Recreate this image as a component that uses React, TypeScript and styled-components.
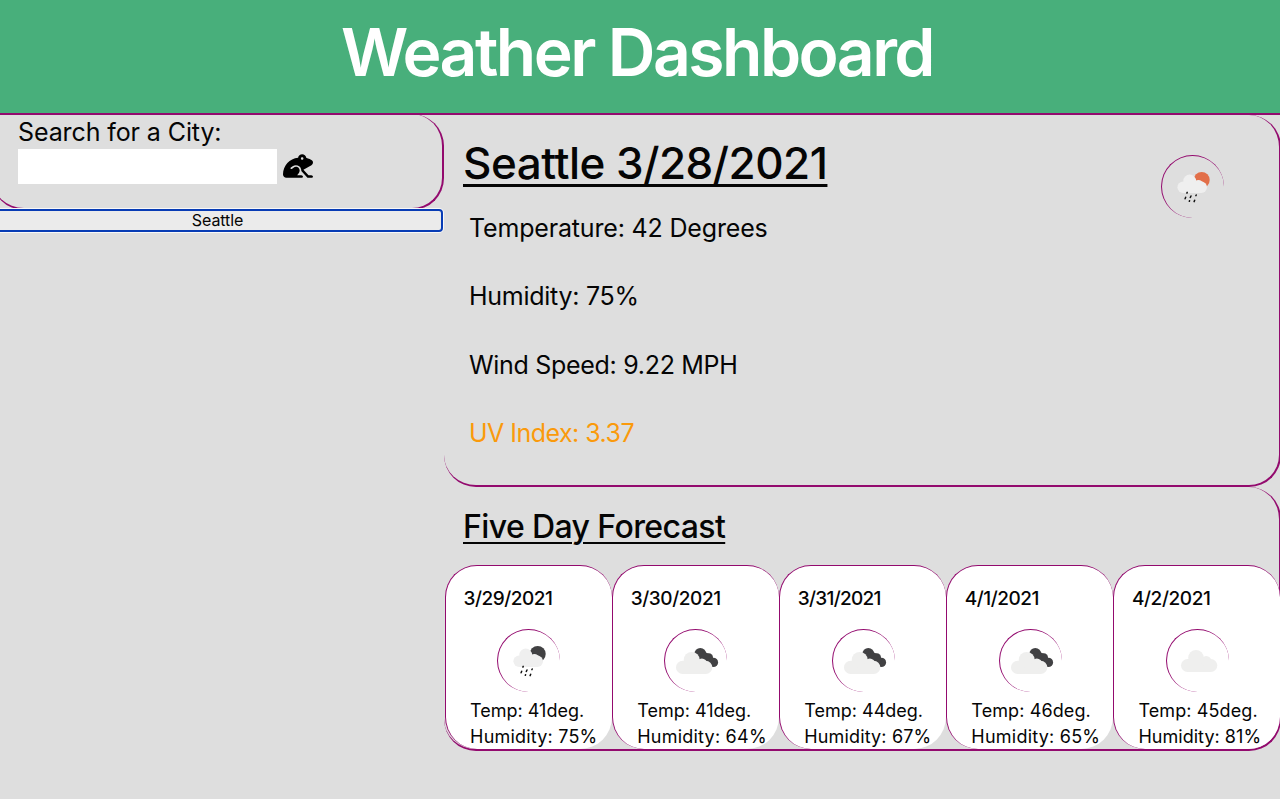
import React from 'react';
import styled, { createGlobalStyle } from 'styled-components';
import { FaFrog } from 'react-icons/fa';

const plum = '#930a6e';

const GlobalStyle = createGlobalStyle`
  * { box-sizing: border-box; }
  body {
    margin: 0;
    background: #dedede;
    color: #050505;
    font-family: Inter, 'Liberation Sans', sans-serif;
    overflow: hidden;
  }
  h1, h2, h3, h4, p { margin: 0; white-space: nowrap; }
`;

const Header = styled.header`
  height: 115px;
  padding-right: 6px;
  background: #48af7b;
  border-bottom: 2px solid ${plum};
  text-align: center;
`;

const Title = styled.h1`
  color: #fff;
  font-size: 66px;
  font-weight: 600;
  line-height: 104px;
  letter-spacing: -2.55px;
`;

const Page = styled.main`
  display: grid;
  grid-template-columns: 444px 837px;
`;

const Sidebar = styled.aside`
  margin-left: -8px;
`;

const SearchPanel = styled.section`
  height: 96px;
  margin-top: -1px;
  padding: 0 0 0 26px;
  border: 0 solid ${plum};
  border-width: 0 2px 2px 0;
  border-radius: 32px;
`;

const SearchLabel = styled.label`
  display: block;
  padding-top: 1px;
  font-size: 25px;
  line-height: 34px;
  letter-spacing: -0.1px;
`;

const SearchRow = styled.div`
  display: flex;
  align-items: center;
  gap: 6px;
`;

const SearchInput = styled.input`
  width: 259px;
  height: 34.5px;
  border: 0;
  padding: 0 6px;
  background: #fff;
  outline: none;
`;

const SearchButton = styled.button`
  display: flex;
  padding: 0;
  border: 0;
  background: none;
  color: #000;
`;

const HistoryButton = styled.button`
  display: block;
  width: 451px;
  height: 23px;
  margin-top: -1px;
  padding: 0;
  border: 2px solid #083cb5;
  border-radius: 4px;
  background: #ebebeb;
  box-shadow: 0 0 0 1px #f8f8f8;
  color: #050505;
  font-family: inherit;
  font-size: 16px;
  line-height: 19px;
  letter-spacing: -0.1px;
`;

const Current = styled.section`
  display: flex;
  justify-content: space-between;
  height: 372px;
  padding: 20px 55px 0 19px;
  border: 0 solid ${plum};
  border-width: 0 2px 2px 0;
  border-radius: 32px;
`;

const CityHeading = styled.h2`
  font-size: 44px;
  font-weight: 500;
  line-height: 56px;
  letter-spacing: -0.5px;
  text-decoration: underline;
  text-decoration-thickness: 3px;
  text-decoration-skip-ink: none;
  text-underline-offset: 5px;
`;

const Reading = styled.p<{ $color?: string; $tracking: number }>`
  margin: 0 0 36.5px 6px;
  font-size: 25px;
  line-height: 32px;
  letter-spacing: ${(p) => p.$tracking}px;
  color: ${(p) => p.$color ?? 'inherit'};
`;

const Readings = styled.div`
  padding-top: 20.5px;
`;

const IconRing = styled.div<{ $large?: boolean }>`
  flex: none;
  width: 63px;
  height: 63px;
  margin: ${(p) => (p.$large ? '20px 0 0' : '17px 0 0 51.8px')};
  border: 0 solid ${plum};
  border-width: 1.5px 0 0 1.5px;
  border-radius: 50%;
  svg { display: block; margin: -1px 0 0 0; }
`;

const Forecast = styled.section`
  height: 264px;
  border: 0 solid ${plum};
  border-width: 0 2px 2px 0;
  border-radius: 32px;
`;

const ForecastHeading = styled.h3`
  padding: 20px 0 0 19px;
  font-size: 32px;
  font-weight: 500;
  line-height: 40px;
  letter-spacing: -0.6px;
  text-decoration: underline;
  text-decoration-thickness: 2px;
  text-underline-offset: 4px;
`;

const Days = styled.div`
  display: grid;
  grid-template-columns: repeat(5, 1fr);
  margin: 18px -1px 0 0.6px;
`;

const DayCard = styled.article`
  height: 184px;
  padding-top: 19px;
  border: 0 solid ${plum};
  border-width: 1px 0 0 1px;
  border-radius: 32px;
  background: #fff;
`;

const DayDate = styled.h4<{ $tracking: number }>`
  padding-left: 18px;
  font-size: 19px;
  font-weight: 500;
  line-height: 27px;
  letter-spacing: ${(p) => p.$tracking}px;
`;

const DayLine = styled.p<{ $tracking: number }>`
  padding-left: 24.5px;
  font-size: 18px;
  line-height: 25.5px;
  letter-spacing: ${(p) => p.$tracking}px;
`;

const DayLines = styled.div`
  padding-top: 6px;
`;

type Sky = 'sunRain' | 'nightRain' | 'broken' | 'cloudy';

function WeatherIcon({ sky }: { sky: Sky }) {
  const rain = sky === 'sunRain' || sky === 'nightRain';
  return (
    <svg width="62" height="62" viewBox="0 0 62 62">
      {rain && (
        <>
          <circle cx="39.7" cy="25" r="8" fill={sky === 'sunRain' ? '#e26f49' : '#414143'} />
          <g fill="#efefef">
            <rect x="15.4" y="26.5" width="29.6" height="11.5" rx="5.7" />
            <circle cx="27.7" cy="26" r="6.4" />
            <circle cx="36.4" cy="29.6" r="4.7" />
          </g>
          <g stroke="#111" strokeWidth="1.5" strokeLinecap="round">
            <path d="M25.2 37.4l-.3.7M23.7 42.3l-.6 1.4M29 41l-.7 1.5M27.6 45.7l-.3.6M34.2 40l-.3.6M32.7 45.2l-.6 1.4" />
          </g>
        </>
      )}
      {sky === 'broken' && (
        <>
          <g fill="#414143">
            <circle cx="35.3" cy="25" r="6" />
            <circle cx="43.8" cy="28.5" r="4.2" />
            <circle cx="48.4" cy="33.4" r="4.7" />
            <path d="M38 22l6 3 5 5-3 8-10-8z" />
          </g>
          <g fill="#efefee">
            <rect x="11" y="31.7" width="36.3" height="13.3" rx="6.6" />
            <circle cx="26.7" cy="31" r="8" />
            <circle cx="36.8" cy="34.8" r="5.3" />
          </g>
        </>
      )}
      {sky === 'cloudy' && (
        <g fill="#efefee">
          <rect x="14" y="30" width="36.3" height="13" rx="6.5" />
          <circle cx="29" cy="28.7" r="7.8" />
          <circle cx="39.2" cy="32.2" r="5.3" />
        </g>
      )}
    </svg>
  );
}

const days: { date: string; sky: Sky; temp: number; humidity: number; t: [number, number, number] }[] = [
  { date: '3/29/2021', sky: 'nightRain', temp: 41, humidity: 75, t: [-0.5, 0, 0.2] },
  { date: '3/30/2021', sky: 'broken', temp: 41, humidity: 64, t: [-0.4, 0, 0.23] },
  { date: '3/31/2021', sky: 'broken', temp: 44, humidity: 67, t: [-0.7, 0, 0.15] },
  { date: '4/1/2021', sky: 'broken', temp: 46, humidity: 65, t: [-0.5, 0.1, 0.23] },
  { date: '4/2/2021', sky: 'cloudy', temp: 45, humidity: 81, t: [-0.4, 0.1, 0.03] },
];

export default function App() {
  return (
    <>
      <GlobalStyle />
      <Header>
        <Title>Weather Dashboard</Title>
      </Header>
      <Page>
        <Sidebar>
          <SearchPanel>
            <SearchLabel htmlFor="city">Search for a City:</SearchLabel>
            <SearchRow>
              <SearchInput id="city" />
              <SearchButton aria-label="Search">
                <FaFrog size={30} />
              </SearchButton>
            </SearchRow>
          </SearchPanel>
          <HistoryButton>Seattle</HistoryButton>
        </Sidebar>
        <div>
          <Current>
            <div>
              <CityHeading>Seattle 3/28/2021</CityHeading>
              <Readings>
                <Reading $tracking={-0.17}>Temperature: 42 Degrees</Reading>
                <Reading $tracking={-0.27}>Humidity: 75%</Reading>
                <Reading $tracking={-0.3}>Wind Speed: 9.22 MPH</Reading>
                <Reading $tracking={-0.53} $color="#fa9a0c">UV Index: 3.37</Reading>
              </Readings>
            </div>
            <IconRing $large>
              <WeatherIcon sky="sunRain" />
            </IconRing>
          </Current>
          <Forecast>
            <ForecastHeading>Five Day Forecast</ForecastHeading>
            <Days>
              {days.map((d) => (
                <DayCard key={d.date}>
                  <DayDate $tracking={d.t[0]}>{d.date}</DayDate>
                  <IconRing>
                    <WeatherIcon sky={d.sky} />
                  </IconRing>
                  <DayLines>
                    <DayLine $tracking={d.t[1]}>Temp: {d.temp}deg.</DayLine>
                    <DayLine $tracking={d.t[2]}>Humidity: {d.humidity}%</DayLine>
                  </DayLines>
                </DayCard>
              ))}
            </Days>
          </Forecast>
        </div>
      </Page>
    </>
  );
}
